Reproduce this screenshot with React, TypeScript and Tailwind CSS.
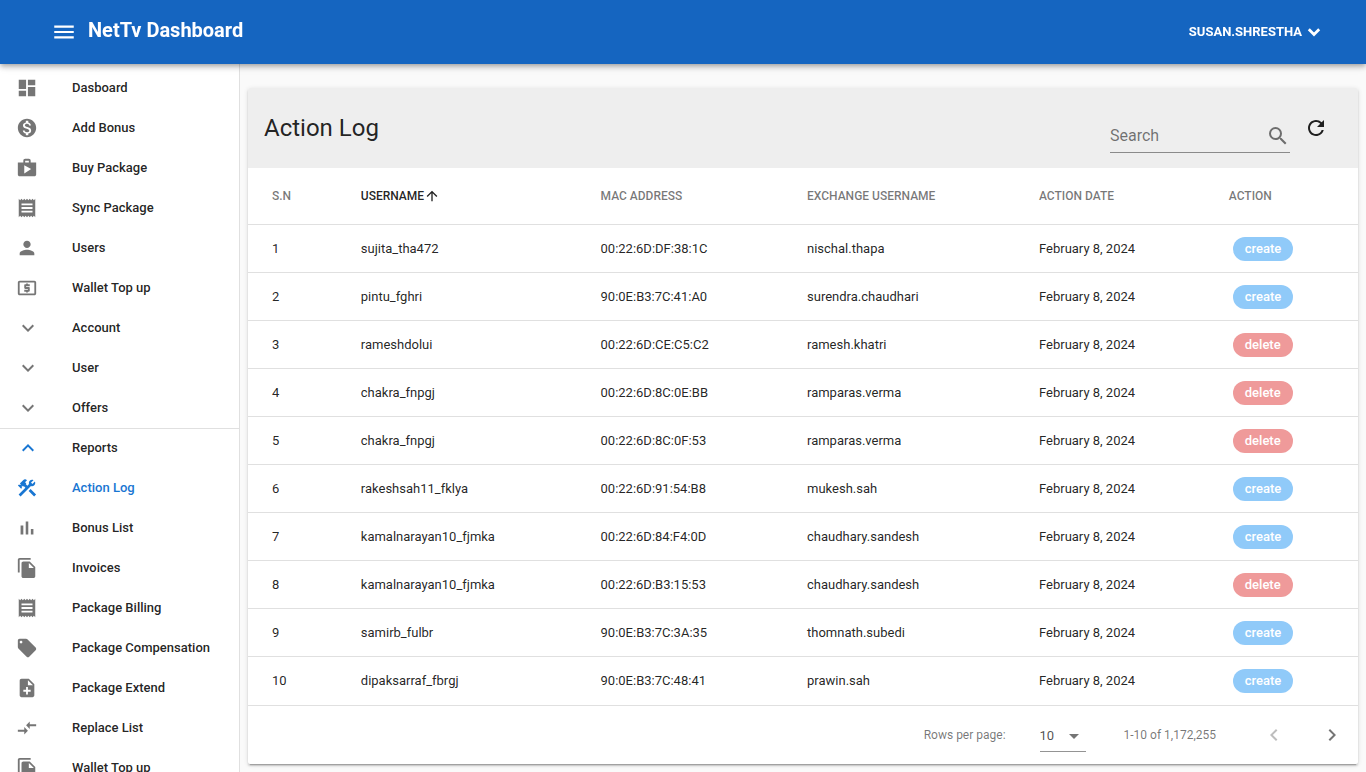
import type { ComponentType, ReactNode } from "react";
import {
  MdArrowUpward, MdArrowDropDown, MdChevronLeft, MdChevronRight, MdCompareArrows,
  MdConstruction, MdDashboard, MdExpandLess, MdExpandMore, MdFileCopy, MdLocalAtm, MdLocalOffer,
  MdMenu, MdMonetizationOn, MdNoteAdd, MdPerson, MdReceipt, MdRefresh, MdSearch, MdShop,
} from "react-icons/md";

type Item = {
  label: string;
  icon: ComponentType<{ className?: string }>;
  active?: boolean;
  blueIcon?: boolean;
  group?: boolean;
};

function BarsIcon({ className }: { className?: string }) {
  return (
    <svg viewBox="0 0 24 24" fill="currentColor" className={className} aria-hidden="true">
      <path d="M5 9.2h3V19H5zM10.6 5h2.8v14h-2.8zm5.6 8H19v6h-2.8z" />
    </svg>
  );
}

function BoldChevron({ className }: { className?: string }) {
  return (
    <svg viewBox="0 0 24 24" fill="none" stroke="currentColor" strokeWidth="2.8" className={className} aria-hidden="true">
      <path d="M6.8 9.3 12 14.5l5.2-5.2" />
    </svg>
  );
}

const topItems: Item[] = [
  { label: "Dasboard", icon: MdDashboard },
  { label: "Add Bonus", icon: MdMonetizationOn },
  { label: "Buy Package", icon: MdShop },
  { label: "Sync Package", icon: MdReceipt },
  { label: "Users", icon: MdPerson },
  { label: "Wallet Top up", icon: MdLocalAtm },
  { label: "Account", icon: MdExpandMore, group: true },
  { label: "User", icon: MdExpandMore, group: true },
  { label: "Offers", icon: MdExpandMore, group: true },
];

const reportItems: Item[] = [
  { label: "Reports", icon: MdExpandLess, group: true, blueIcon: true },
  { label: "Action Log", icon: MdConstruction, active: true, blueIcon: true },
  { label: "Bonus List", icon: BarsIcon },
  { label: "Invoices", icon: MdFileCopy },
  { label: "Package Billing", icon: MdReceipt },
  { label: "Package Compensation", icon: MdLocalOffer },
  { label: "Package Extend", icon: MdNoteAdd },
  { label: "Replace List", icon: MdCompareArrows },
  { label: "Wallet Top up", icon: MdFileCopy },
];

const rows: [string, string, string, "create" | "delete"][] = [
  ["sujita_tha472", "00:22:6D:DF:38:1C", "nischal.thapa", "create"],
  ["pintu_fghri", "90:0E:B3:7C:41:A0", "surendra.chaudhari", "create"],
  ["rameshdolui", "00:22:6D:CE:C5:C2", "ramesh.khatri", "delete"],
  ["chakra_fnpgj", "00:22:6D:8C:0E:BB", "ramparas.verma", "delete"],
  ["chakra_fnpgj", "00:22:6D:8C:0F:53", "ramparas.verma", "delete"],
  ["rakeshsah11_fklya", "00:22:6D:91:54:B8", "mukesh.sah", "create"],
  ["kamalnarayan10_fjmka", "00:22:6D:84:F4:0D", "chaudhary.sandesh", "create"],
  ["kamalnarayan10_fjmka", "00:22:6D:B3:15:53", "chaudhary.sandesh", "delete"],
  ["samirb_fulbr", "90:0E:B3:7C:3A:35", "thomnath.subedi", "create"],
  ["dipaksarraf_fbrgj", "90:0E:B3:7C:48:41", "prawin.sah", "create"],
];

function NavItem({ item }: { item: Item }) {
  const Icon = item.icon;
  const color = item.active ? "text-[#1976d2]" : "text-black/87";
  const iconColor = item.blueIcon ? "text-[#1976d2]" : "text-black/54";
  const cls = `flex h-10 w-full items-center px-4 text-left ${color}`;
  const content: ReactNode = (
    <>
      <span className={`w-14 shrink-0 ${iconColor}`}>
        <Icon className={item.group ? "size-6" : "size-[22px]"} />
      </span>
      <span>{item.label}</span>
    </>
  );
  return (
    <li>
      {item.group ? (
        <button type="button" className={cls}>{content}</button>
      ) : (
        <a href="#" className={cls}>{content}</a>
      )}
    </li>
  );
}

export default function App() {
  return (
    <div className="flex h-screen flex-col overflow-hidden bg-[#fafafa] font-[Roboto,sans-serif] text-black/87">
      <header className="z-10 flex h-16 shrink-0 items-center justify-between bg-[#1565c0] pr-10 pl-[51px] text-white shadow-[0_2px_4px_-1px_rgba(0,0,0,0.2),0_4px_5px_rgba(0,0,0,0.14),0_1px_10px_rgba(0,0,0,0.12)]">
        <div className="flex items-center gap-[11px]">
          <button type="button" aria-label="Toggle menu"><MdMenu className="size-[26px]" /></button>
          <h1 className="pb-1 text-xl font-bold">NetTv Dashboard</h1>
        </div>
        <button type="button" className="flex items-center text-[13px] font-bold">
          SUSAN.SHRESTHA <BoldChevron className="size-6" />
        </button>
      </header>

      <div className="flex min-h-0 flex-1">
        <nav className="w-60 shrink-0 overflow-x-hidden overflow-y-auto border-r border-black/12 bg-white pt-1 text-[13px] font-medium [scrollbar-width:none]">
          <ul>{topItems.map((item) => <NavItem key={item.label} item={item} />)}</ul>
          <ul className="border-t border-black/12 [&>li:first-child]:-mt-px">
            {reportItems.map((item) => <NavItem key={item.label} item={item} />)}
          </ul>
        </nav>

        <main className="min-w-0 flex-1 px-2 pt-6">
          <section className="rounded-xs bg-white shadow-[0_3px_1px_-2px_rgba(0,0,0,0.2),0_2px_2px_rgba(0,0,0,0.14),0_1px_5px_rgba(0,0,0,0.12)]">
            <div className="flex h-20 items-center justify-between rounded-t-xs bg-[#eeeeee] pr-[30px] pl-4">
              <h2 className="text-2xl">Action Log</h2>
              <div className="flex items-center gap-3.5">
                <label className="mt-4 flex h-[34px] w-[180px] items-center border-b border-black/42">
                  <input aria-label="Search" placeholder="Search" className="min-w-0 flex-1 bg-transparent text-base outline-none placeholder:text-black/54" />
                  <MdSearch className="size-6 text-black/54" />
                </label>
                <button type="button" aria-label="Refresh"><MdRefresh className="size-6" /></button>
              </div>
            </div>

            <table className="w-full table-fixed border-separate border-spacing-0 text-left text-[13px]">
              <colgroup>
                <col className="w-[8%]" />
                <col className="w-[21.6%]" />
                <col className="w-[18.6%]" />
                <col className="w-[20.9%]" />
                <col className="w-[17.1%]" />
                <col />
              </colgroup>
              <thead>
                <tr className="h-14 text-xs text-black/54 [&>th]:px-6 [&>th]:font-medium">
                  <th>S.N</th>
                  <th className="text-black/87">
                    <button type="button" className="flex items-center">USERNAME<MdArrowUpward className="size-4" /></button>
                  </th>
                  <th>MAC ADDRESS</th>
                  <th>EXCHANGE USERNAME</th>
                  <th>ACTION DATE</th>
                  <th>ACTION</th>
                </tr>
              </thead>
              <tbody>
                {rows.map(([user, mac, exchange, action], i) => (
                  <tr key={mac} className="h-12 [&>td]:border-t [&>td]:border-black/12 [&>td]:px-6">
                    <td>{i + 1}</td>
                    <td>{user}</td>
                    <td>{mac}</td>
                    <td>{exchange}</td>
                    <td>February 8, 2024</td>
                    <td>
                      <span className={`ml-1 inline-flex h-6 items-center rounded-full px-3 align-middle font-medium text-white ${action === "create" ? "bg-[#90caf9]" : "bg-[#ef9a9a]"}`}>
                        {action}
                      </span>
                    </td>
                  </tr>
                ))}
              </tbody>
            </table>

            <div className="mt-px flex h-[59px] items-center justify-end border-t border-black/12 pr-3.5 text-xs text-black/54">
              <label htmlFor="rows-per-page">Rows per page:</label>
              <div className="relative mt-0.5 mr-[38px] ml-[34px] flex h-8 w-[46px] items-center border-b border-black/42">
                <select id="rows-per-page" className="w-full appearance-none bg-transparent text-[13px] text-black/70 outline-none">
                  <option>10</option>
                  <option>25</option>
                </select>
                <MdArrowDropDown className="pointer-events-none absolute right-0 size-6" />
              </div>
              <span>1-10 of 1,172,255</span>
              <button type="button" aria-label="Previous page" disabled className="ml-[46px] text-black/26"><MdChevronLeft className="size-6" /></button>
              <button type="button" aria-label="Next page" className="ml-[34px]"><MdChevronRight className="size-6" /></button>
            </div>
          </section>
        </main>
      </div>
    </div>
  );
}
